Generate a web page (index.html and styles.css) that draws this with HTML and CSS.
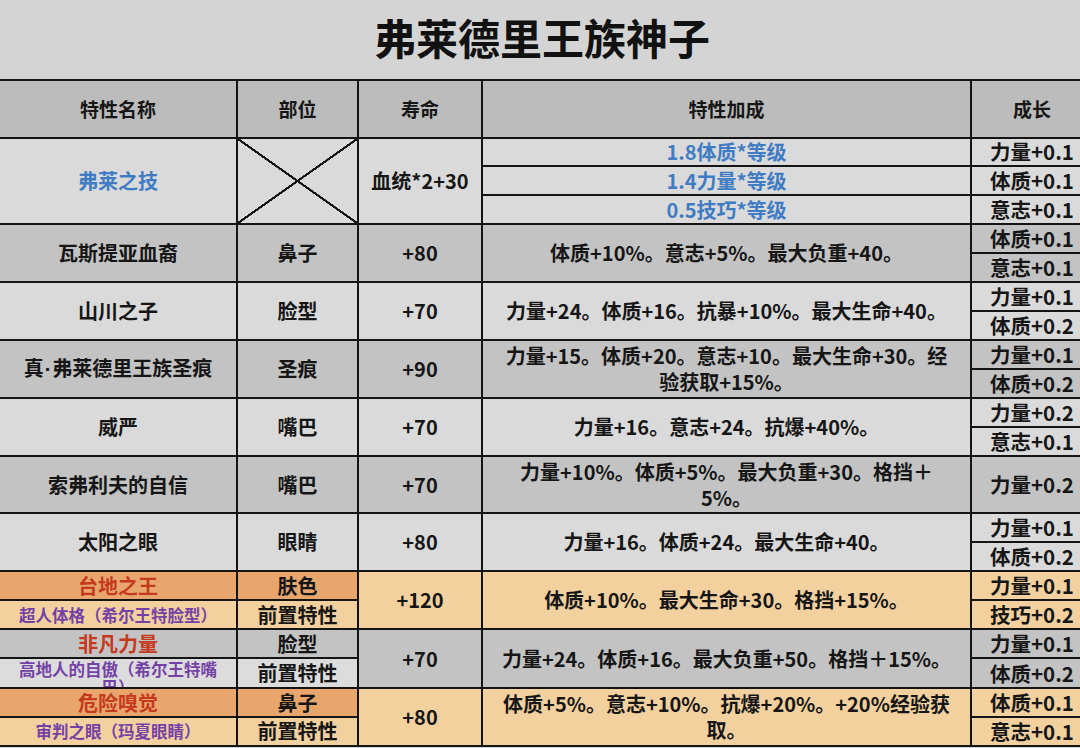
FILE: index.html
```html
<!DOCTYPE html>
<html lang="zh">
<head>
<meta charset="utf-8">
<title>弗莱德里王族神子</title>
<link rel="stylesheet" href="styles.css">
</head>
<body>
<h1 class="title">弗莱德里王族神子</h1>
<table class="traits">
  <colgroup>
    <col class="c-name"><col class="c-part"><col class="c-life"><col class="c-bonus"><col class="c-grow">
  </colgroup>
  <tr class="head">
    <th>特性名称</th><th>部位</th><th>寿命</th><th>特性加成</th><th>成长</th>
  </tr>

  <tr class="s light">
    <td rowspan="3" class="blue">弗莱之技</td>
    <td rowspan="3" class="cross"></td>
    <td rowspan="3">血统*2+30</td>
    <td class="blue">1.8体质*等级</td>
    <td class="grow">力量+0.1</td>
  </tr>
  <tr class="s light"><td class="blue">1.4力量*等级</td><td class="grow">体质+0.1</td></tr>
  <tr class="s light"><td class="blue">0.5技巧*等级</td><td class="grow">意志+0.1</td></tr>

  <tr class="s dark">
    <td rowspan="2">瓦斯提亚血裔</td><td rowspan="2">鼻子</td><td rowspan="2">+80</td>
    <td rowspan="2">体质+10%。意志+5%。最大负重+40。</td>
    <td class="grow">体质+0.1</td>
  </tr>
  <tr class="s dark"><td class="grow">意志+0.1</td></tr>

  <tr class="s light">
    <td rowspan="2">山川之子</td><td rowspan="2">脸型</td><td rowspan="2">+70</td>
    <td rowspan="2">力量+24。体质+16。抗暴+10%。最大生命+40。</td>
    <td class="grow">力量+0.1</td>
  </tr>
  <tr class="s light"><td class="grow">体质+0.2</td></tr>

  <tr class="s dark">
    <td rowspan="2">真<span class="dot">·</span>弗莱德里王族圣痕</td><td rowspan="2">圣痕</td><td rowspan="2">+90</td>
    <td rowspan="2" class="wrap">力量+15。体质+20。意志+10。最大生命+30。经<br>验获取+15%。</td>
    <td class="grow">力量+0.1</td>
  </tr>
  <tr class="s dark"><td class="grow">体质+0.2</td></tr>

  <tr class="s light">
    <td rowspan="2">威严</td><td rowspan="2">嘴巴</td><td rowspan="2">+70</td>
    <td rowspan="2">力量+16。意志+24。抗爆+40%。</td>
    <td class="grow">力量+0.2</td>
  </tr>
  <tr class="s light"><td class="grow">意志+0.1</td></tr>

  <tr class="s dark">
    <td rowspan="2">索弗利夫的自信</td><td rowspan="2">嘴巴</td><td rowspan="2">+70</td>
    <td rowspan="2" class="wrap">力量+10%。体质+5%。最大负重+30。格挡＋<br>5%。</td>
    <td rowspan="2" class="grow">力量+0.2</td>
  </tr>
  <tr class="s dark"></tr>

  <tr class="s light">
    <td rowspan="2">太阳之眼</td><td rowspan="2">眼睛</td><td rowspan="2">+80</td>
    <td rowspan="2">力量+16。体质+24。最大生命+40。</td>
    <td class="grow">力量+0.1</td>
  </tr>
  <tr class="s light"><td class="grow">体质+0.2</td></tr>

  <tr class="s peach">
    <td class="deep red">台地之王</td><td class="deep">肤色</td>
    <td rowspan="2">+120</td>
    <td rowspan="2">体质+10%。最大生命+30。格挡+15%。</td>
    <td class="grow">力量+0.1</td>
  </tr>
  <tr class="s peach">
    <td class="purple">超人体格（希尔王特脸型）</td><td>前置特性</td>
    <td class="grow">技巧+0.2</td>
  </tr>

  <tr class="s dark">
    <td class="red">非凡力量</td><td>脸型</td>
    <td rowspan="2">+70</td>
    <td rowspan="2">力量+24。体质+16。最大负重+50。格挡＋15%。</td>
    <td class="grow">力量+0.1</td>
  </tr>
  <tr class="s dark">
    <td class="purple pale"><div class="clip">高地人的自傲（希尔王特嘴<br>巴）</div></td><td class="pale">前置特性</td>
    <td class="grow">体质+0.2</td>
  </tr>

  <tr class="s peach">
    <td class="deep red">危险嗅觉</td><td class="deep">鼻子</td>
    <td rowspan="2">+80</td>
    <td rowspan="2" class="wrap">体质+5%。意志+10%。抗爆+20%。+20%经验获<br>取。</td>
    <td class="grow">体质+0.1</td>
  </tr>
  <tr class="s peach">
    <td class="purple">审判之眼（玛夏眼睛）</td><td>前置特性</td>
    <td class="grow">意志+0.1</td>
  </tr>
</table>
</body>
</html>
```

FILE: styles.css
```css
html, body {
  margin: 0;
  padding: 0;
  background: #d4d4d4;
  overflow: hidden;
}

body {
  width: 1080px;
  height: 748px;
  font-family: "Noto Sans CJK SC", "Noto Sans", "Liberation Sans", sans-serif;
  color: #161616;
}

.title {
  margin: 0;
  height: 79px;
  line-height: 74px;
  text-align: center;
  font-size: 42px;
  font-weight: 700;
  color: #111;
  padding-left: 4px;
}

.traits {
  border-collapse: collapse;
  table-layout: fixed;
  width: 1094px;
  margin-left: -2px;
}

.c-name { width: 238px; }
.c-part { width: 121px; }
.c-life { width: 124px; }
.c-bonus { width: 489px; }
.c-grow { width: 122px; }

.traits th,
.traits td {
  border: 2px solid #141414;
  padding: 0;
  text-align: center;
  vertical-align: middle;
  font-size: 20px;
  font-weight: 600;
  line-height: 24px;
  white-space: nowrap;
  overflow: hidden;
}

.head { height: 57.5px; }
.head th { background: #bcbcbc; font-size: 19px; }

.s { height: 28.93px; }

.light td { background: #dadada; }
.dark td { background: #c3c3c3; }
.peach td { background: #f3d19f; }
.peach td.deep { background: #e8a66d; }
.dark td.pale { background: #dcdcdc; }

.traits td.grow {
  font-size: 20.5px;
  line-height: 25px;
}

.traits td.wrap { line-height: 26px; }

.dot {
  font-family: "Liberation Sans", sans-serif;
  margin: 0 1px;
}

.blue { color: #3f7cc4; }
.red { color: #c5391d; }
.traits td.purple {
  color: #7442a6;
  font-size: 16.5px;
}

.traits td.cross {
  background:
    linear-gradient(to top right, transparent calc(50% - 1.2px), #141414 calc(50% - 1px), #141414 calc(50% + 1px), transparent calc(50% + 1.2px)),
    linear-gradient(to bottom right, transparent calc(50% - 1.2px), #141414 calc(50% - 1px), #141414 calc(50% + 1px), transparent calc(50% + 1.2px)),
    #dadada;
}

.clip {
  height: 28px;
  overflow: hidden;
  line-height: 18px;
  padding-top: 1px;
  box-sizing: border-box;
}
```
